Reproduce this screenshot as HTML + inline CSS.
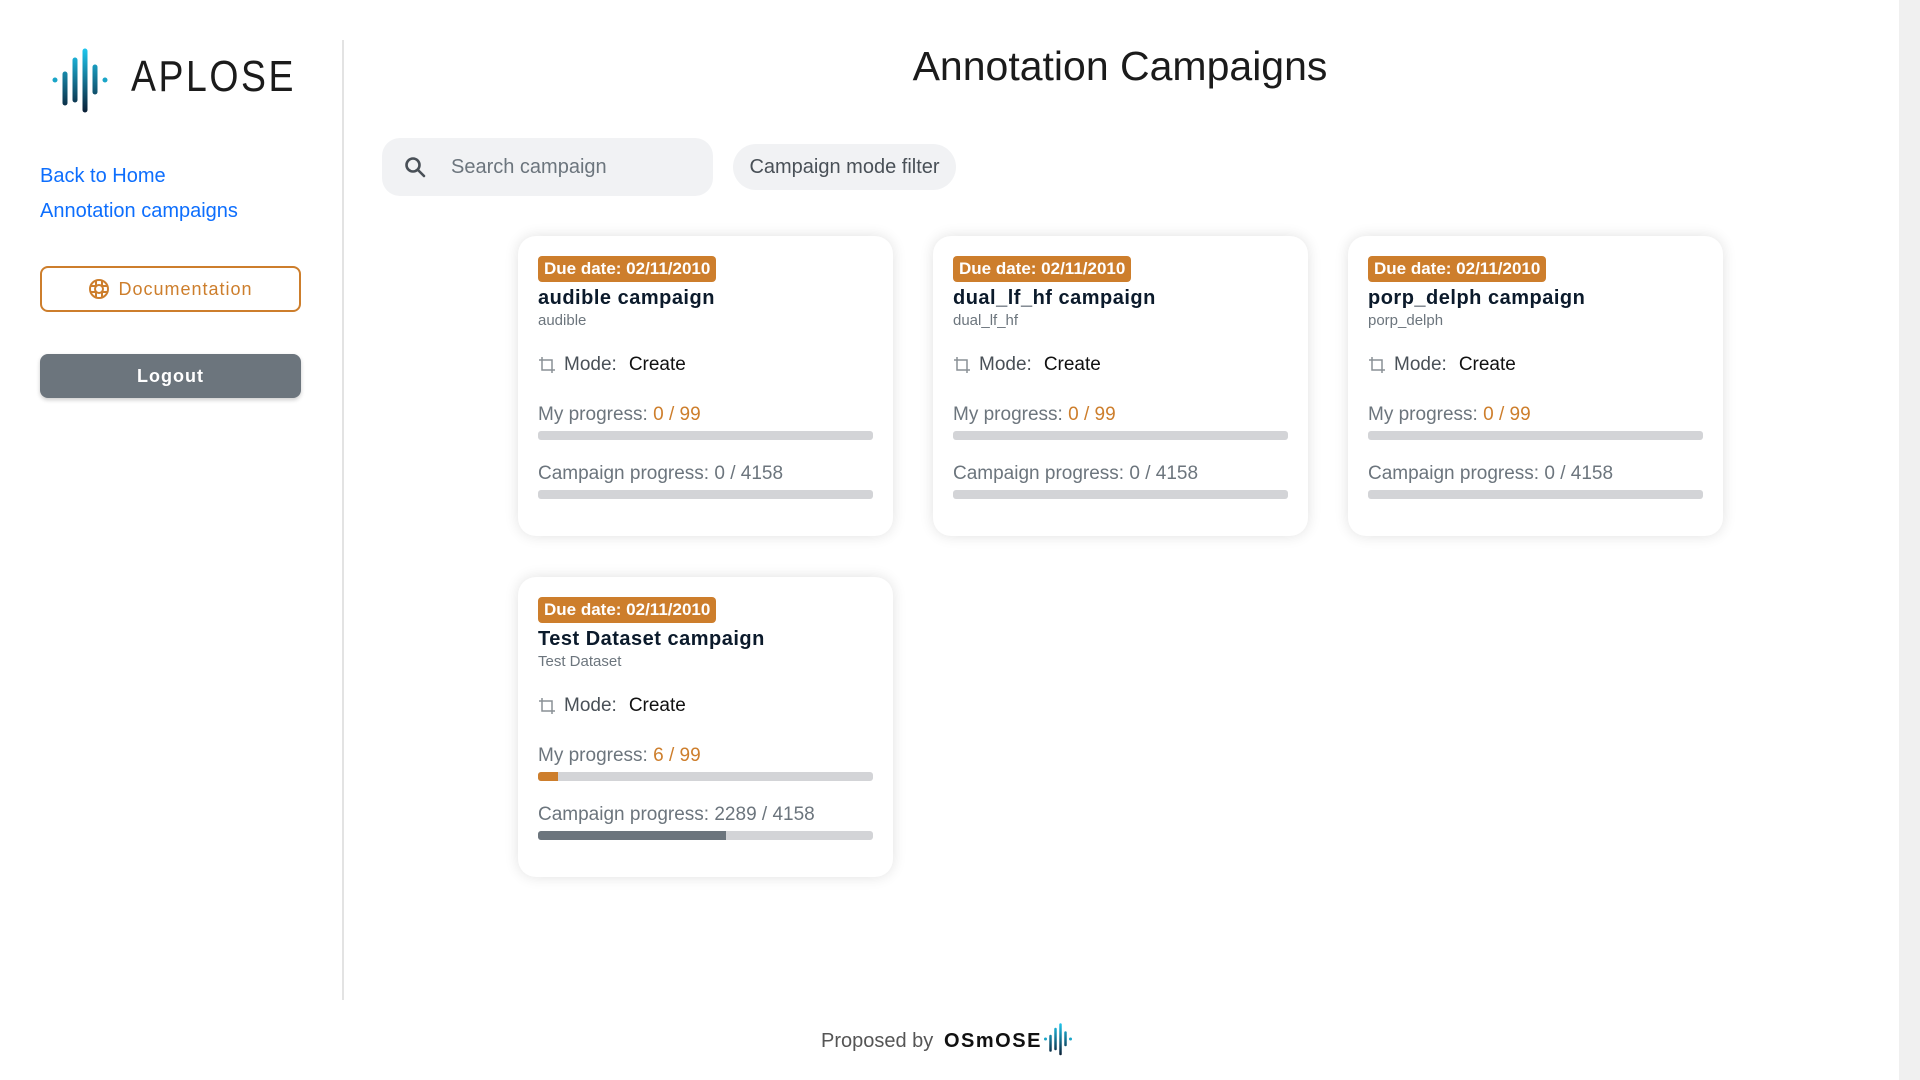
<!DOCTYPE html>
<html><head><meta charset="utf-8"><style>
*{box-sizing:border-box;margin:0;padding:0}
body{width:1920px;height:1080px;overflow:hidden;background:#fff;font-family:"Liberation Sans",sans-serif;position:relative;color:#212529}
.abs{position:absolute}
.side{left:342px;top:40px;width:2px;height:960px;background:#e3e3e3}
.logo-t{left:131px;top:52px;font-size:44px;letter-spacing:3px;color:#1b1b1b;transform:scaleX(.85);transform-origin:left}
.link{left:40px;font-size:20px;color:#0d6efd}
.doc{left:40px;top:266px;width:261px;height:46px;border:2px solid #cd7e2c;border-radius:8px;color:#cd7e2c;font-size:18px;letter-spacing:1px;display:flex;align-items:center;justify-content:center;gap:8px}
.logout{left:40px;top:354px;width:261px;height:44px;background:#6c757d;border-radius:8px;color:#fff;font-size:18px;font-weight:bold;letter-spacing:1px;display:flex;align-items:center;justify-content:center;box-shadow:0 2px 4px rgba(0,0,0,.2)}
h1{position:absolute;width:1340px;text-align:center;top:43px;font-size:41px;font-weight:normal;color:#1b1b1b;left:450px}
.search{left:382px;top:138px;width:331px;height:58px;background:#f1f2f4;border-radius:18px;font-size:20px;color:#6c757d;display:flex;align-items:center;padding-left:22px;gap:25px}
.filter{left:733px;top:144px;width:223px;height:46px;background:#f1f2f4;border-radius:23px;font-size:20px;color:#495057;display:flex;align-items:center;justify-content:center}
.card{width:375px;height:300px;background:#fff;border-radius:18px;box-shadow:0 0 14px rgba(0,0,0,.12);padding:20px}
.badge{display:inline-block;background:#cd7e2c;color:#fff;font-weight:bold;font-size:17px;padding:2px 6px;border-radius:4px;height:26px;line-height:22px}
.ct{font-size:20px;font-weight:bold;margin-top:5px;color:#0b1a2b;letter-spacing:.5px}
.cs{font-size:15px;color:#6c757d;margin-top:2px}
.mode{font-size:19px;color:#495057;margin-top:25px;display:flex;align-items:center;gap:8px}
.mode b{font-weight:normal;color:#111;margin-left:4px}
.pl{font-size:19px;color:#6c757d}
.or{color:#cd7e2c}
.bar{height:9px;background:#d3d4d7;border-radius:3px;width:335px;margin-top:5px;overflow:hidden}
.bar i{display:block;height:100%}
.scroll{left:1899px;top:0;width:21px;height:1080px;background:#f0f0f0}
</style></head><body>
<svg width="0" height="0" style="position:absolute"><defs><linearGradient id="g" gradientUnits="userSpaceOnUse" x1="0" y1="0" x2="0" y2="66"><stop offset="0" stop-color="#1ec8f0"/><stop offset="1" stop-color="#0a1a30"/></linearGradient></defs></svg>
<div class="abs side"></div>
<svg class="abs" style="left:50px;top:48px" width="60" height="66" viewBox="0 0 60 66">
<g stroke="url(#g)" stroke-width="5" stroke-linecap="round">
<line x1="15" y1="26" x2="15" y2="55"/><line x1="25" y1="12" x2="25" y2="52"/><line x1="35" y1="3" x2="35" y2="62"/><line x1="45" y1="19" x2="45" y2="44"/></g>
<circle cx="5" cy="32" r="2.5" fill="#1aa5c8"/><circle cx="55" cy="32" r="2.5" fill="#1aa5c8"/></svg>
<div class="abs logo-t">APLOSE</div>
<div class="abs link" style="top:165px">Back to Home</div>
<div class="abs link" style="top:200px">Annotation campaigns</div>
<div class="abs doc"><svg width="22" height="22" viewBox="0 0 22 22" fill="none" stroke="#cd7e2c" stroke-width="2"><circle cx="11" cy="11" r="9"/><circle cx="11" cy="11" r="4"/><path d="M8 2.5v5M14 2.5v5M8 14.5v5M14 14.5v5M2.5 8h5M2.5 14h5M14.5 8h5M14.5 14h5"/></svg>Documentation</div>
<div class="abs logout">Logout</div>
<h1>Annotation Campaigns</h1>
<div class="abs search"><svg width="22" height="22" viewBox="0 0 22 22" fill="none" stroke="#495057" stroke-width="2.6"><circle cx="9" cy="9" r="6.5"/><path d="M14 14l6 6" stroke-linecap="round"/></svg>Search campaign</div>
<div class="abs filter">Campaign mode filter</div>

<div class="abs card" style="left:518px;top:236px">
<span class="badge">Due date: 02/11/2010</span><div class="ct">audible campaign</div><div class="cs">audible</div>
<div class="mode"><svg width="18" height="18" viewBox="0 0 18 18" fill="none" stroke="#8a9096" stroke-width="1.5"><path d="M4 1v13h13M1 4h13v13"/></svg>Mode: <b>Create</b></div>
<div class="pl" style="margin-top:28px">My progress: <span class="or">0 / 99</span></div><div class="bar"></div>
<div class="pl" style="margin-top:23px">Campaign progress: 0 / 4158</div><div class="bar"></div></div>

<div class="abs card" style="left:933px;top:236px">
<span class="badge">Due date: 02/11/2010</span><div class="ct">dual_lf_hf campaign</div><div class="cs">dual_lf_hf</div>
<div class="mode"><svg width="18" height="18" viewBox="0 0 18 18" fill="none" stroke="#8a9096" stroke-width="1.5"><path d="M4 1v13h13M1 4h13v13"/></svg>Mode: <b>Create</b></div>
<div class="pl" style="margin-top:28px">My progress: <span class="or">0 / 99</span></div><div class="bar"></div>
<div class="pl" style="margin-top:23px">Campaign progress: 0 / 4158</div><div class="bar"></div></div>

<div class="abs card" style="left:1348px;top:236px">
<span class="badge">Due date: 02/11/2010</span><div class="ct">porp_delph campaign</div><div class="cs">porp_delph</div>
<div class="mode"><svg width="18" height="18" viewBox="0 0 18 18" fill="none" stroke="#8a9096" stroke-width="1.5"><path d="M4 1v13h13M1 4h13v13"/></svg>Mode: <b>Create</b></div>
<div class="pl" style="margin-top:28px">My progress: <span class="or">0 / 99</span></div><div class="bar"></div>
<div class="pl" style="margin-top:23px">Campaign progress: 0 / 4158</div><div class="bar"></div></div>

<div class="abs card" style="left:518px;top:577px">
<span class="badge">Due date: 02/11/2010</span><div class="ct">Test Dataset campaign</div><div class="cs">Test Dataset</div>
<div class="mode"><svg width="18" height="18" viewBox="0 0 18 18" fill="none" stroke="#8a9096" stroke-width="1.5"><path d="M4 1v13h13M1 4h13v13"/></svg>Mode: <b>Create</b></div>
<div class="pl" style="margin-top:28px">My progress: <span class="or">6 / 99</span></div><div class="bar"><i style="width:6%;background:#cd7e2c"></i></div>
<div class="pl" style="margin-top:23px">Campaign progress: 2289 / 4158</div><div class="bar"><i style="width:56%;background:#6c757d"></i></div></div>

<div class="abs" style="left:821px;top:1030px;font-size:20px;color:#555">Proposed by</div>
<div class="abs" style="left:944px;top:1030px;font-size:20px;font-weight:bold;letter-spacing:1.5px;color:#111">OSmOSE</div>
<svg class="abs" style="left:1043px;top:1023px" width="30" height="33" viewBox="0 0 60 66">
<g stroke="url(#g)" stroke-width="5" stroke-linecap="round">
<line x1="15" y1="26" x2="15" y2="55"/><line x1="25" y1="12" x2="25" y2="52"/><line x1="35" y1="3" x2="35" y2="62"/><line x1="45" y1="19" x2="45" y2="44"/></g>
<circle cx="5" cy="32" r="3" fill="#1aa5c8"/><circle cx="55" cy="32" r="3" fill="#1aa5c8"/></svg>
<div class="abs scroll"></div>
</body></html>
